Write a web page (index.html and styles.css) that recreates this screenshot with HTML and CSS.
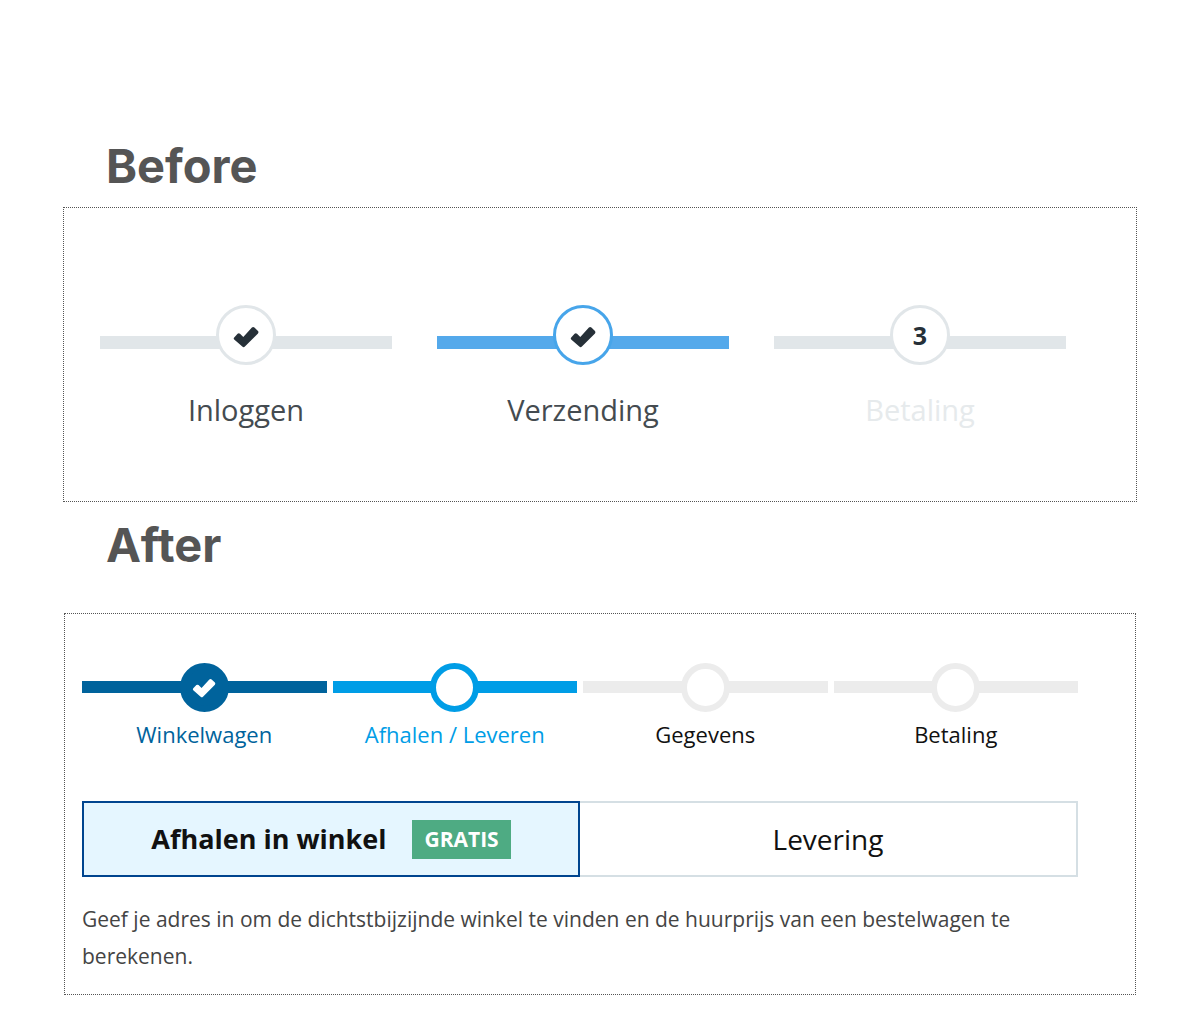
FILE: index.html
```html
<!DOCTYPE html>
<html lang="nl">
<head>
<meta charset="utf-8">
<meta name="viewport" content="width=device-width, initial-scale=1">
<title>Before / After</title>
<link rel="stylesheet" href="styles.css">
</head>
<body>
<svg class="sprite" aria-hidden="true">
  <symbol id="check" viewBox="0 0 26 22">
    <path d="M1.2 11.4 4.6 7.8Q5.8 6.9 7 7.8L10.3 11 18.9 1.6Q20.2.5 21.4 1.6L25 5Q25.9 6.2 25 7.4L11.9 20.6Q10.6 21.8 9.3 20.6L1.2 13.6Q.2 12.5 1.2 11.4Z"/>
  </symbol>
</svg>
<main class="page">
  <section class="before">
    <h2 class="title">Before</h2>
    <div class="panel panel-before">
      <ol class="steps steps-before">
        <li class="step">
          <div class="track"><span class="line"></span><span class="dot"><svg class="check"><use href="#check"/></svg></span></div>
          <span class="label">Inloggen</span>
        </li>
        <li class="step step-active">
          <div class="track"><span class="line"></span><span class="dot"><svg class="check"><use href="#check"/></svg></span></div>
          <span class="label">Verzending</span>
        </li>
        <li class="step step-todo">
          <div class="track"><span class="line"></span><span class="dot">3</span></div>
          <span class="label">Betaling</span>
        </li>
      </ol>
    </div>
  </section>
  <section class="after">
    <h2 class="title">After</h2>
    <div class="panel panel-after">
      <ol class="steps steps-after">
        <li class="step step-done">
          <div class="track"><span class="line"></span><span class="dot"><svg class="check"><use href="#check"/></svg></span></div>
          <span class="label">Winkelwagen</span>
        </li>
        <li class="step step-current">
          <div class="track"><span class="line"></span><span class="dot"></span></div>
          <span class="label">Afhalen / Leveren</span>
        </li>
        <li class="step">
          <div class="track"><span class="line"></span><span class="dot"></span></div>
          <span class="label">Gegevens</span>
        </li>
        <li class="step">
          <div class="track"><span class="line"></span><span class="dot"></span></div>
          <span class="label">Betaling</span>
        </li>
      </ol>
      <div class="options">
        <button type="button" class="option option-selected" aria-pressed="true">Afhalen in winkel <span class="badge">GRATIS</span></button>
        <button type="button" class="option option-plain" aria-pressed="false">Levering</button>
      </div>
      <p class="hint">Geef je adres in om de dichtstbijzijnde winkel te vinden en de huurprijs van een bestelwagen te berekenen.</p>
    </div>
  </section>
</main>
</body>
</html>
```

FILE: styles.css
```css
* {
  box-sizing: border-box;
}

body {
  margin: 0;
  background: #fff;
  color: #111;
  font-family: "Open Sans", "Noto Sans", sans-serif;
}

.sprite {
  display: none;
}

.page {
  padding: 136px 56px 36px 63px;
}

.title {
  margin: 0 0 11px 43px;
  color: #555;
  font: 700 47px/60px Inter, sans-serif;
}

.after {
  padding-top: 13px;
}

.after .title {
  margin-bottom: 38px;
}

.panel {
  border: 1px dotted #555;
}

.panel-before {
  padding: 97px 70px 70px 36px;
}

.panel-after {
  margin: 0 1px;
  padding: 49px 57px 19px 17px;
}

.steps {
  display: flex;
  margin: 0;
  padding: 0;
  list-style: none;
}

.step {
  display: flex;
  flex: 1 1 0;
  flex-direction: column;
  text-align: center;
}

.track {
  display: grid;
  justify-items: center;
}

.line,
.dot {
  grid-area: 1 / 1;
}

.line {
  width: 100%;
}

.dot {
  display: flex;
  align-items: center;
  justify-content: center;
  border-radius: 50%;
  background: #fff;
}

.check {
  fill: currentColor;
}

.steps-before {
  gap: 45px;
  color: #263038;
}

.steps-before .line {
  height: 13px;
  margin-top: 31px;
  background: #e1e6e9;
}

.steps-before .dot {
  width: 60px;
  height: 60px;
  border: 3px solid #e1e6e9;
  font-size: 25px;
  font-weight: 700;
}

.steps-before .check {
  width: 26px;
  height: 22px;
  margin-top: 4px;
}

.steps-before .label {
  margin-top: 24px;
  color: #444b50;
  font-size: 29px;
  line-height: 42px;
}

.steps-before .step-active .line {
  background: #54a9eb;
}

.steps-before .step-active .dot {
  border-color: #47a5ea;
}

.steps-before .step-todo .label {
  color: #e6eaec;
}

.steps-after {
  gap: 6px;
}

.steps-after .line {
  height: 12px;
  margin-top: 18px;
  background: #ececec;
}

.steps-after .dot {
  width: 49px;
  height: 49px;
  border: 6px solid #ececec;
}

.steps-after .label {
  margin-top: 7px;
  font-size: 22px;
  line-height: 30px;
}

.steps-after .check {
  width: 24px;
  height: 20px;
}

.step-done .label {
  color: #00639c;
}

.steps-after .step-done .line {
  background: #00639c;
}

.steps-after .step-done .dot {
  border-color: #00639c;
  background: #00639c;
  color: #fff;
}

.step-current .label {
  color: #009de6;
}

.steps-after .step-current .line {
  background: #009de6;
}

.steps-after .step-current .dot {
  border-color: #009de6;
}

.options {
  display: grid;
  grid-template-columns: 1fr 1fr;
  margin-top: 52px;
}

.option {
  display: flex;
  align-items: center;
  justify-content: center;
  gap: 26px;
  height: 76px;
  padding: 0;
  border: 2px solid #d5dfe4;
  background: #fff;
  color: #111;
  font: 400 28px/38px "Open Sans", "Noto Sans", sans-serif;
}

.option-selected {
  border-color: #00458f;
  background: #e5f6ff;
  font-size: 27px;
  font-weight: 700;
}

.option-plain {
  border-left: 0;
}

.badge {
  padding: 0 12px;
  background: #4eab83;
  color: #fff;
  font-size: 21px;
  line-height: 39px;
}

.hint {
  margin: 24px 0 0;
  color: #444;
  font-size: 21px;
  line-height: 37px;
}
```
